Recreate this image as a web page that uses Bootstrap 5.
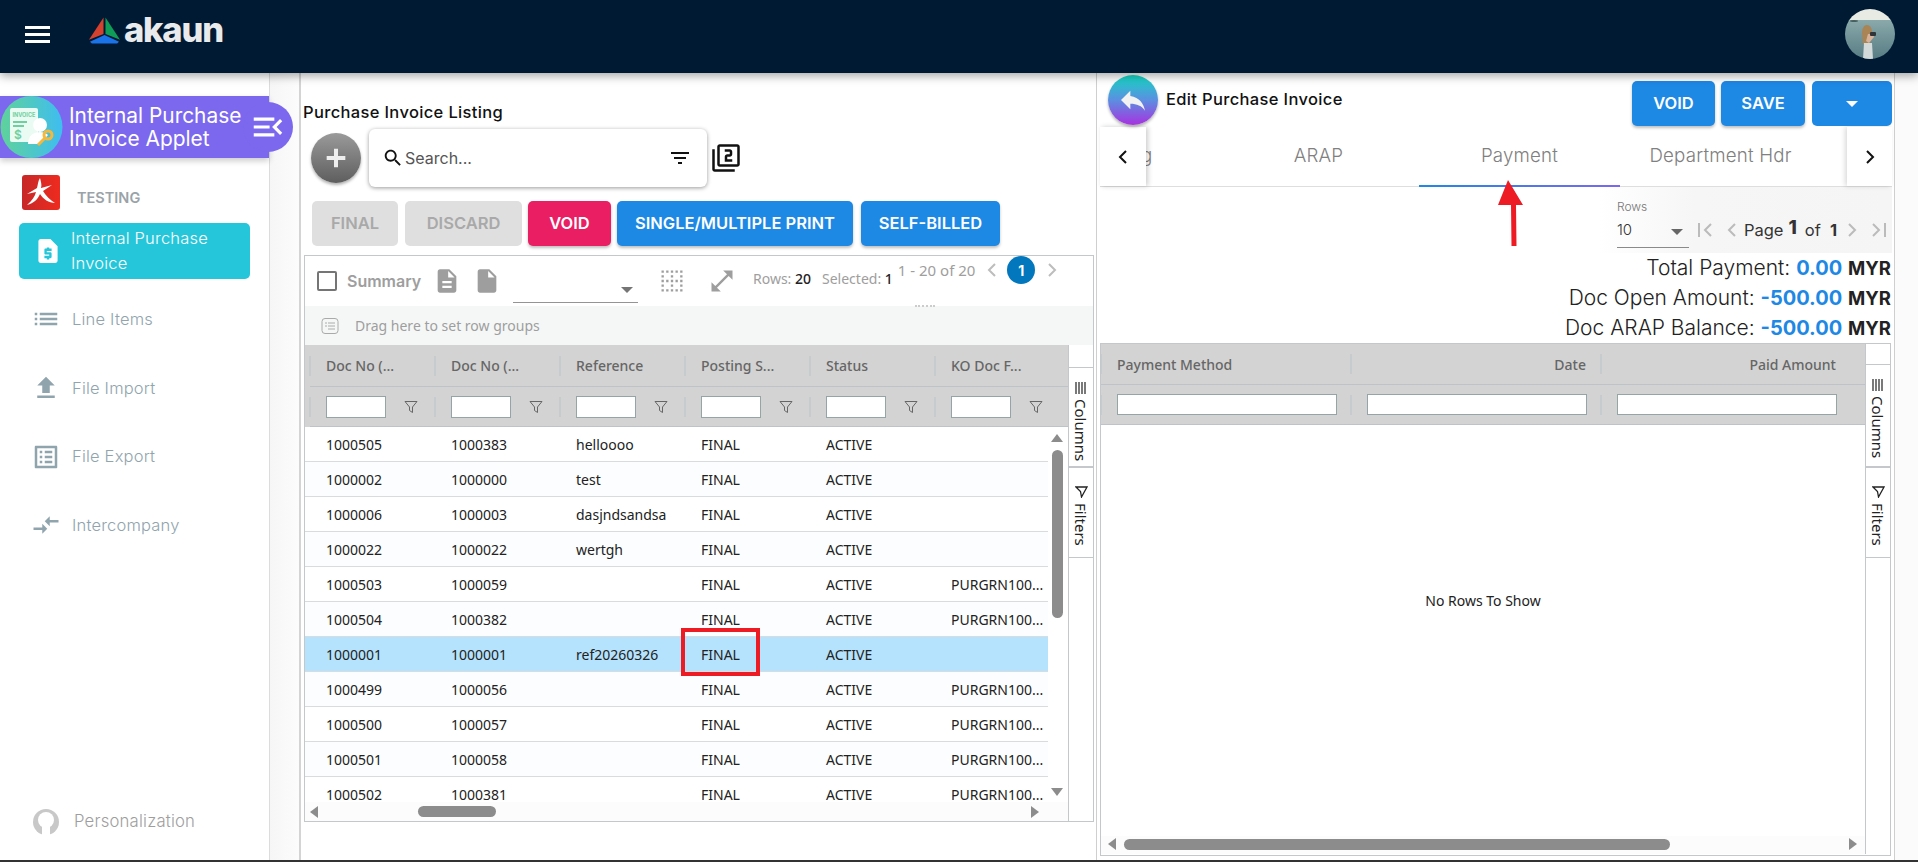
<!DOCTYPE html>
<html lang="en">
<head>
<meta charset="UTF-8">
<title>Internal Purchase Invoice Applet</title>
<link href="https://cdn.jsdelivr.net/npm/bootstrap@5.3.0/dist/css/bootstrap.min.css" rel="stylesheet">
<style>
body{height:862px;width:1918px;overflow:hidden;background:#fff;font-family:Inter,"Liberation Sans",sans-serif;color:#222;position:relative}
.top-bar{height:73px;background:#001a33;box-shadow:0 3px 9px rgba(0,0,0,.35);position:relative;z-index:5;padding-left:25px;padding-right:23px}
.burger{width:25px;height:17px;border-top:3px solid #fff;border-bottom:3px solid #fff;position:relative;margin-top:-5px}
.burger:after{content:"";position:absolute;left:0;right:0;top:4px;height:3px;background:#fff}
.brand-logo{margin-left:38px;margin-top:-11px}
.brand-word{font-weight:800;font-size:34.5px;letter-spacing:-1.2px;color:#e9eaeb;line-height:1;margin-left:3px;margin-top:-12px}
.avatar{width:50px;height:50px;border-radius:50%;overflow:hidden;margin-top:-5px}
.page-wrap{height:787px}
.foot-line{height:2px;background:#333}
.side-nav{width:270px;border-right:1px solid #dcdcdc;padding-top:23px;background:#fff;position:relative}
.applet-head{height:62px;background:#7b68ee;color:#fff;position:relative;box-shadow:0 3px 6px rgba(0,0,0,.2);font-size:20.9px;line-height:23px;font-weight:400;padding-left:69px;white-space:nowrap}
.applet-ico{position:absolute;left:0;top:0}
.applet-tab{position:absolute;right:-24px;top:6px;width:50px;height:50px;border-radius:50%;background:#7b68ee}
.org-row{padding:17px 0 0 22px;height:65px}
.org-name{font-size:14.5px;font-weight:600;color:#9aa3a9;margin-left:17px;margin-top:12px}
.nav-cur{margin-left:19px;width:231px;height:56px;background:#26c6da;border-radius:5px;color:#fff;font-size:16.5px;letter-spacing:.2px;font-weight:300;line-height:25px;padding-left:17px;white-space:nowrap}
.nav-cur span{margin-left:11px;display:block}
.nav-line{height:68.7px;padding-left:31px;color:#90a4ae;font-size:16.5px;letter-spacing:.2px;font-weight:300}
.nav-line svg{fill:#90a4ae;width:30px;height:30px;margin-right:11px;flex:none}
.nav-one{margin-top:6px}
.person-row{margin-top:auto;padding:0 0 25px 33px;color:#9e9e9e;font-size:16.7px;letter-spacing:.2px;font-weight:300}
.person-disc{margin-right:15px;flex:none}
.gutter{width:31px;background:linear-gradient(90deg,#f6f6f6,#fcfcfc);border-right:2px solid #d4d4d4}
.left-pane{width:796px;border-right:1px solid #cfcfcf;padding-left:2px;background:#fff}
.right-pane{width:795px;margin-left:3px;border-right:1px solid #cfcfcf;padding-right:2px}
.end-strip{flex:1;background:#fbfbfb}
.pane-title{font-size:16.5px;letter-spacing:.35px;font-weight:500;color:#111;height:24px;line-height:24px;white-space:nowrap}
.title-row{margin-top:27px}
.fab{width:50px;height:50px;border-radius:50%;background:linear-gradient(180deg,#9a9a9a,#5e5e5e);box-shadow:0 2px 3px rgba(0,0,0,.3);flex:none}
.search-card{width:338px;height:58px;background:#fff;border-radius:6px;box-shadow:0 1px 4px rgba(0,0,0,.4);margin-left:8px;padding:0 15px 0 13px;font-size:16px;color:#555}
.act-row{margin-top:14px;padding-left:9px;height:45px}
.act-btn{height:45px;border:0;border-radius:5px;font-size:16.5px;font-weight:600;padding:0;color:#fff;background:#1e88e5;box-shadow:0 2px 3px rgba(0,0,0,.25)}
.act-off{background:#dfdfdf;color:#a9a9a9;box-shadow:none}
.act-void{background:#e91e63}
.grid-frame{border:1px solid #c5c8ca;background:#fff;font-family:"Noto Sans",sans-serif;font-size:14px;color:#222}
.left-grid{width:790px;height:567px;margin:9px 0 0 1px}
.tool-row{height:50px;color:#9e9e9e;position:relative}
.tick-box{width:20px;height:20px;border:2px solid #757575;border-radius:2px;margin-left:12px}
.sum-word{font-family:Inter,sans-serif;font-weight:600;font-size:16px;color:#9e9e9e;margin-left:10px;width:75px;flex:none;white-space:nowrap}
.pick-line{width:125px;height:32px;border-bottom:1px solid #949494;margin-left:12px;margin-top:12px;position:relative}
.caret-d{width:0;height:0;border-left:6px solid transparent;border-right:6px solid transparent;border-top:6px solid #757575}
.pick-line .caret-d{position:absolute;right:5px;top:16px}
.page-ball{width:28px;height:28px;border-radius:50%;background:#0277bd;color:#fff;font-weight:700;font-family:Inter,sans-serif;font-size:14px;flex:none}
.grip-dots{position:absolute;left:610px;bottom:-1px;width:20px;border-top:2px dotted #ccc}
.group-row{height:39px;background:#f5f7f7;color:#9e9e9e;font-size:14px;padding-left:16px}
.head-cell{width:125px;flex:none;padding-left:16px;position:relative;color:#666;font-weight:500;font-size:14px}
.head-cell:before{content:"";position:absolute;left:-1px;top:50%;height:20px;margin-top:-10px;width:2px;background:#c6cbce}
.hdr-band{background:#d3d3d3;padding-left:5px;overflow:hidden}
.hdr-names{height:42px;border-bottom:1px solid #bcc4c8}
.hdr-filter{height:40px;border-bottom:1px solid #bcc4c8}
.mini-input{width:60px;height:22px;background:#fff;border:1px solid #95a5a6}
.data-rows{width:743px;height:375px;overflow:hidden}
.data-row{height:35px;padding-left:5px;border-bottom:1px solid #d9dcde;background:#fff}
.data-row:nth-child(even){background:#fcfdfe}
.data-row.picked{background:#b5e3fd}
.data-cell{width:125px;flex:none;padding-left:16px;white-space:nowrap;overflow:hidden}
.v-track{width:20px;background:#fff;padding-top:7px}
.v-thumb{width:11px;height:168px;background:#8c8c8c;border-radius:6px;margin:8px 0 0 4px}
.tri-up,.tri-dn{width:0;height:0;border-left:6px solid transparent;border-right:6px solid transparent;margin-left:3px}
.tri-up{border-bottom:8px solid #8c8c8c}
.tri-dn{border-top:8px solid #8c8c8c;margin-top:auto;margin-bottom:6px}
.tri-lf,.tri-rt{width:0;height:0;border-top:6px solid transparent;border-bottom:6px solid transparent}
.tri-lf{border-right:8px solid #8c8c8c}
.tri-rt{border-left:8px solid #8c8c8c}
.h-track{height:19px;background:#fcfcfc}
.h-thumb{height:11px;background:#8c8c8c;border-radius:6px}
.side-tools{width:25px;border-left:1px solid #c5c8ca;font-size:15px;color:#222;flex:none}
.side-tab{border-top:1px solid #c5c8ca;padding-top:14px;writing-mode:vertical-rl;align-items:center;display:flex;width:24px}
.side-tab svg{margin-bottom:5px;flex:none}
.tab-cols{height:101px;border-bottom:2px solid #c5c8ca}
.tab-filt{height:90px;border-top:0;border-bottom:1px solid #c5c8ca;padding-top:17px}
.back-ball{width:50px;height:50px;border-radius:50%;background:linear-gradient(180deg,#14d8c4,#5b8fe0 50%,#a832e0);box-shadow:0 2px 3px rgba(0,0,0,.3);margin:2px 8px 0 8px;flex:none}
.edit-head{height:54px;position:relative;z-index:2}
.edit-btn{height:45px;border:0;border-radius:5px;background:#1e88e5;color:#fff;font-size:16.5px;font-weight:600;box-shadow:0 2px 3px rgba(0,0,0,.25);padding:0}
.tab-strip{height:60px;border-bottom:1px solid #dedede;color:#808080;font-size:18.7px;letter-spacing:.2px;font-weight:300;position:relative}
.tab-arrow{width:46px;height:59px;background:#fff;flex:none;z-index:1}
.tab-arrow.lf{box-shadow:2px 0 5px rgba(0,0,0,.2)}
.tab-arrow.rt{box-shadow:-2px 0 5px rgba(0,0,0,.15);width:45px}
.tab-item{height:59px;flex:none;text-align:center;line-height:58px;width:201px;white-space:nowrap}
.tab-clip{width:72px;overflow:hidden;text-align:left;text-indent:-5px}
.tab-on{position:absolute;left:319px;bottom:-1px;width:201px;height:2px;background:linear-gradient(90deg,#1e88e5,#7b68ee)}
.pager-row{height:66px;background:linear-gradient(90deg,#fff 0,#fff 63%,#f6f6f6 75%,#f5f5f5);color:#9e9e9e}
.rows-pick{width:72px;height:50px;border-bottom:1px solid #8a8a8a;margin-top:6px;position:relative;font-size:12px;font-weight:300;color:#777}
.rows-val{font-size:15px;color:#333;margin-top:3px}
.rows-pick .caret-d{position:absolute;right:6px;top:31px;border-top-color:#666}
.page-word{font-size:16.5px;color:#333;font-weight:400}
.big-one{font-size:19px;font-weight:800;color:#333}
.total-line{height:30px;line-height:30px;font-size:21px;font-weight:300;text-align:right;padding-right:1px;color:#222;white-space:nowrap}
.total-line b{color:#1e88e5;font-weight:700;font-size:20px}
.total-line em{font-style:normal;font-weight:700;color:#222;font-size:18.5px}
.right-grid{width:791px;height:513px}
.head-wide{width:250px;padding-right:15px}
.wide-input{width:220px;height:21px;background:#fff;border:1px solid #95a5a6}
.empty-body{height:411px;padding-bottom:60px;font-size:14px}
.mark-box{position:absolute;left:681px;top:628px;width:79px;height:48px;border:4px solid #ed1c24;z-index:6}
.red-arrow{position:absolute;left:1490px;top:176px;z-index:6}
</style>
</head>
<body>
<nav class="top-bar d-flex align-items-center">
  <div class="burger"></div>
  <svg class="brand-logo" width="33" height="30" viewBox="0 0 34 30"><path d="M16 1 1 24l15-6z" fill="#d5412f"/><path d="M18 1 33 24l-15-6z" fill="#0f9d58"/><path d="M17 19 2 26l2 2h26l2-2z" fill="#1a73e8"/></svg>
  <div class="brand-word">akaun</div>
  <div class="ms-auto avatar">
    <svg width="50" height="50" viewBox="0 0 50 50"><defs><linearGradient id="sea" x1="0" x2="0" y1="0" y2="1"><stop offset="0" stop-color="#8aa9ab"/><stop offset="1" stop-color="#567c83"/></linearGradient></defs><rect width="50" height="12" fill="#e8eae4"/><rect y="11" width="50" height="39" fill="url(#sea)"/><ellipse cx="9" cy="12" rx="4" ry="1" fill="#46605f"/><path d="M17 24c0-5 2-8 5-8s5 3 5 7l-2 12h-7z" fill="#a98455"/><path d="M23 25h5l1 3-5 6-3-2z" fill="#d8b399"/><path d="M19 34h8l1 16H18z" fill="#d4d9da"/><rect x="25" y="23" width="6" height="4" rx="1" fill="#2f3438"/></svg>
  </div>
</nav>

<div class="page-wrap d-flex">
  <aside class="side-nav d-flex flex-column">
    <div class="applet-head d-flex align-items-center">
      <div class="applet-ico">
        <svg width="63" height="62" viewBox="0 0 63 62"><defs><linearGradient id="ig" x1="0" x2="1"><stop offset="0" stop-color="#5fd29a"/><stop offset="1" stop-color="#3fbdf0"/></linearGradient></defs><circle cx="31.500" cy="31" r="31" fill="url(#ig)"/><rect x="10" y="12" width="28" height="34" rx="2" fill="#e9fbf2"/><text x="12.500" y="21" font-size="5.500" font-weight="700" fill="#6ecf9f" font-family="Inter">INVOICE</text><rect x="13" y="25" width="14" height="2" fill="#6ecf9f"/><rect x="13" y="29" width="11" height="2" fill="#6ecf9f"/><text x="14" y="43" font-size="12" font-weight="600" fill="#6ecf9f" font-family="Inter">$</text><circle cx="40" cy="29" r="7" fill="#fff"/><path d="M28 48c0-8 5-12 12-12 3 0 6 1 8 3l-8 9z" fill="#fff"/><circle cx="48" cy="39" r="4" fill="none" stroke="#f5b83d" stroke-width="3"/><path d="M45 42l-7 7" stroke="#f5b83d" stroke-width="3"/></svg>
      </div>
      <div>Internal Purchase<br>Invoice Applet</div>
      <div class="applet-tab d-flex align-items-center justify-content-end">
        <svg style="margin-right:6px" width="38" height="38" viewBox="0 0 24 24" fill="#fff"><path d="M3 18h13v-2H3v2zm0-5h10v-2H3v2zm0-7v2h13V6H3zm18 9.590L17.420 12 21 8.410 19.590 7l-5 5 5 5L21 15.590z"/></svg>
      </div>
    </div>
    <div class="org-row d-flex">
      <svg width="38" height="35" viewBox="0 0 38 35"><defs><linearGradient id="org" x1="0" x2="1"><stop offset="0" stop-color="#c62828"/><stop offset="1" stop-color="#ee2b1f"/></linearGradient></defs><rect width="38" height="35" rx="3" fill="url(#org)"/><path d="M18 3c1 4 2 7 1 10l11-3-9 6c3 5 7 9 12 12-6 0-12-4-15-9-2 5-6 9-13 11 5-4 8-9 9-13l-9 2 10-6c1-4 1-7 3-10z" fill="#fff"/></svg>
      <div class="org-name">TESTING</div>
    </div>
    <div class="nav-cur d-flex align-items-center">
      <svg width="24" height="28" viewBox="2 1 20 22" fill="#fff" style="flex:none"><path d="M14 2H6c-1.100 0-1.990.9-1.990 2L4 20c0 1.100.89 2 1.990 2H18c1.100 0 2-.9 2-2V8l-6-6zm1 10h-4v1h3c.55 0 1 .45 1 1v3c0 .55-.45 1-1 1h-1v1h-2v-1H9v-2h4v-1h-3c-.55 0-1-.45-1-1v-3c0-.55.45-1 1-1h1V9h2v1h2v2z"/></svg>
      <span>Internal Purchase<br>Invoice</span>
    </div>
    <div class="nav-line nav-one d-flex align-items-center"><svg viewBox="0 0 24 24"><path d="M3 13h2v-2H3v2zm0 4h2v-2H3v2zm0-8h2V7H3v2zm4 4h14v-2H7v2zm0 4h14v-2H7v2zM7 7v2h14V7H7z"/></svg>Line Items</div>
    <div class="nav-line d-flex align-items-center"><svg viewBox="0 0 24 24"><path d="M9 16h6v-6h4l-7-7-7 7h4zm-4 2h14v2H5z"/></svg>File Import</div>
    <div class="nav-line d-flex align-items-center"><svg viewBox="0 0 24 24"><path d="M19 5v14H5V5h14m1.100-2H3.900c-.5 0-.9.4-.9.9v16.200c0 .4.4.9.9.9h16.200c.4 0 .9-.5.9-.9V3.900c0-.5-.5-.9-.9-.9zM11 7h6v2h-6V7zm0 4h6v2h-6v-2zm0 4h6v2h-6zM7 7h2v2H7zm0 4h2v2H7zm0 4h2v2H7z"/></svg>File Export</div>
    <div class="nav-line d-flex align-items-center"><svg viewBox="0 0 24 24"><path d="M9.010 14H2v2h7.010v3L13 15l-3.990-4v3zm5.980-1v-3H22V8h-7.010V5L11 9l3.990 4z"/></svg>Intercompany</div>
    <div class="person-row d-flex align-items-center"><svg class="person-disc" width="26" height="26" viewBox="0 0 26 26"><circle cx="13" cy="13" r="13" fill="#c8c8c8"/><circle cx="13" cy="11" r="8" fill="#fff"/><rect x="9" y="15" width="8" height="11" fill="#fff"/></svg>Personalization</div>
  </aside>
  <div class="gutter"></div>

  <section class="left-pane">
    <div class="pane-title title-row">Purchase Invoice Listing</div>
    <div class="d-flex align-items-center" style="margin-top:5px;padding-left:8px">
      <div class="fab d-flex align-items-center justify-content-center"><svg width="32" height="32" viewBox="0 0 24 24" fill="#eee"><path d="M19 13.500h-5.500V19h-3v-5.500H5v-3h5.500V5h3v5.500H19z"/></svg></div>
      <div class="search-card d-flex align-items-center">
        <svg width="22" height="22" viewBox="0 0 24 24" fill="#111"><path d="M15.500 14h-.79l-.28-.27C15.410 12.590 16 11.110 16 9.500 16 5.910 13.090 3 9.500 3S3 5.910 3 9.500 5.910 16 9.500 16c1.610 0 3.090-.59 4.230-1.570l.27.28v.79l5 4.990L20.490 19l-4.990-5zm-6 0C7.010 14 5 11.990 5 9.500S7.010 5 9.500 5 14 7.010 14 9.500 11.990 14 9.500 14z"/></svg>
        <span style="margin-left:1px">Search...</span>
        <svg class="ms-auto" width="24" height="24" viewBox="0 0 24 24" fill="#111"><path d="M10 18h4v-2h-4v2zM3 6v2h18V6H3zm3 7h12v-2H6v2z"/></svg>
      </div>
      <svg class="ms-1" width="30" height="30" viewBox="0 0 24 24" fill="#111"><path d="M3 5H1v16c0 1.100.9 2 2 2h16v-2H3V5zm18-4H7c-1.100 0-2 .9-2 2v14c0 1.100.9 2 2 2h14c1.100 0 2-.9 2-2V3c0-1.100-.9-2-2-2zm0 16H7V3h14v14zm-4-4h-4v-2h2c1.100 0 2-.89 2-2V7c0-1.110-.9-2-2-2h-4v2h4v2h-2c-1.100 0-2 .89-2 2v4h6v-2z"/></svg>
    </div>
    <div class="act-row d-flex">
      <button class="act-btn act-off" style="width:86px">FINAL</button>
      <button class="act-btn act-off" style="width:117px;margin-left:7px">DISCARD</button>
      <button class="act-btn act-void" style="width:83px;margin-left:6px">VOID</button>
      <button class="act-btn" style="width:236px;margin-left:6px">SINGLE/MULTIPLE PRINT</button>
      <button class="act-btn" style="width:139px;margin-left:8px">SELF-BILLED</button>
    </div>

    <div class="grid-frame left-grid">
      <div class="tool-row d-flex align-items-center">
        <div class="tick-box"></div><div class="sum-word">Summary</div>
        <svg style="margin-left:11px" width="28" height="28" viewBox="0 0 24 24" fill="#9e9e9e"><path d="M14 2H6c-1.100 0-1.990.9-1.990 2L4 20c0 1.100.89 2 1.990 2H18c1.100 0 2-.9 2-2V8l-6-6zm2 16H8v-2h8v2zm0-4H8v-2h8v2zm-3-5V3.500L18.500 9H13z"/></svg>
        <svg style="margin-left:12px" width="28" height="28" viewBox="0 0 24 24" fill="#9e9e9e"><path d="M6 2c-1.100 0-1.990.9-1.990 2L4 20c0 1.100.89 2 1.990 2H18c1.100 0 2-.9 2-2V8l-6-6H6zm7 7V3.500L18.500 9H13z"/></svg>
        <div class="pick-line"><div class="caret-d"></div></div>
        <svg style="margin-left:20px" width="28" height="28" viewBox="0 0 24 24" fill="#9e9e9e"><path d="M7 5h2V3H7v2zm0 8h2v-2H7v2zm0 8h2v-2H7v2zm4-4h2v-2h-2v2zm0 4h2v-2h-2v2zm-8 0h2v-2H3v2zm0-4h2v-2H3v2zm0-4h2v-2H3v2zm0-4h2V7H3v2zm0-4h2V3H3v2zm8 8h2v-2h-2v2zm8 4h2v-2h-2v2zm0-4h2v-2h-2v2zm0 8h2v-2h-2v2zm0-12h2V7h-2v2zm-8 0h2V7h-2v2zm8-6v2h2V3h-2zm-8 2h2V3h-2v2zm4 16h2v-2h-2v2zm0-8h2v-2h-2v2zm0-8h2V3h-2v2z"/></svg>
        <svg style="margin-left:22px" width="28" height="28" viewBox="0 0 24 24" fill="#9e9e9e"><path d="M21 11V3h-8l3.290 3.290-10 10L3 13v8h8l-3.290-3.290 10-10z"/></svg>
        <div style="margin-left:17px;margin-top:-6px;white-space:nowrap;font-size:14px">Rows: <span style="color:#222;font-weight:500;margin-right:11px">20</span>Selected: <span style="color:#222;font-weight:500">1</span></div>
        <div style="margin-left:5px;margin-top:-22px;white-space:nowrap;font-size:15px">1 - 20 of 20</div>
        <svg style="margin:-22px 0 0 12px" width="10" height="16" viewBox="0 0 10 16" fill="none" stroke="#bdbdbd" stroke-width="2"><path d="M8 2 2 8l6 6"/></svg>
        <div class="page-ball d-flex align-items-center justify-content-center" style="margin:-22px 0 0 10px">1</div>
        <svg style="margin:-22px 0 0 12px" width="10" height="16" viewBox="0 0 10 16" fill="none" stroke="#bdbdbd" stroke-width="2"><path d="M2 2l6 6-6 6"/></svg>
        <div class="grip-dots"></div>
      </div>
      <div class="group-row d-flex align-items-center">
        <svg width="18" height="18" viewBox="0 0 18 18" fill="none" stroke="#aaa"><rect x="1" y="1.500" width="16" height="15" rx="3"/><path d="M4 6h2M7 6h7M4 9h2M7 9h7M7 12h7"/></svg>
        <span style="margin-left:16px">Drag here to set row groups</span>
      </div>
      <div class="d-flex">
        <div style="width:763px">
          <div class="hdr-band">
            <div class="hdr-names d-flex align-items-center" id="leftHead"></div>
            <div class="hdr-filter d-flex align-items-center" id="leftFilter"></div>
          </div>
          <div class="d-flex">
            <div class="data-rows" id="leftRows"></div>
            <div class="v-track d-flex flex-column"><div class="tri-up"></div><div class="v-thumb"></div><div class="tri-dn"></div></div>
          </div>
          <div class="h-track d-flex align-items-center">
            <div class="tri-lf" style="margin-left:5px"></div><div class="h-thumb" style="width:78px;margin-left:100px"></div><div class="tri-rt" style="margin-left:535px"></div>
          </div>
        </div>
        <div class="side-tools">
          <div style="height:22px"></div>
          <div class="side-tab tab-cols"><svg width="12" height="12" viewBox="0 0 12 12" stroke="#333" stroke-width="1.300"><path d="M1 0v12M4 0v12M7 0v12M10 0v12"/></svg>Columns</div>
          <div class="side-tab tab-filt"><svg width="13" height="13" viewBox="0 0 13 13" fill="none" stroke="#222" stroke-width="1.300"><path d="M1 2h11L6.500 12 5.500 6.500z"/></svg>Filters</div>
        </div>
      </div>
    </div>
  </section>

  <section class="right-pane">
    <div class="edit-head d-flex align-items-start">
      <div class="back-ball d-flex align-items-center justify-content-center"><svg width="32" height="32" viewBox="0 0 24 24" fill="#f2f2f2"><path d="M10 9V5l-7 7 7 7v-4.100c5 0 8.500 1.600 11 5.100-1-5-4-10-11-11z"/></svg></div>
      <div class="pane-title" style="margin-top:14px">Edit Purchase Invoice</div>
      <div class="ms-auto d-flex" style="margin-top:8px;gap:6px">
        <button class="edit-btn" style="width:83px">VOID</button>
        <button class="edit-btn" style="width:84px">SAVE</button>
        <button class="edit-btn d-flex align-items-center justify-content-center" style="width:80px;margin-left:1px;box-shadow:none"><span class="caret-d" style="border-top-color:#fff"></span></button>
      </div>
    </div>
    <div class="tab-strip d-flex">
      <div class="tab-arrow lf d-flex align-items-center justify-content-center"><svg width="12" height="16" viewBox="0 0 12 16" fill="none" stroke="#111" stroke-width="2"><path d="M9 2 3 8l6 6"/></svg></div>
      <div class="tab-item tab-clip">g</div>
      <div class="tab-item">ARAP</div>
      <div class="tab-item">Payment</div>
      <div class="tab-item">Department Hdr</div>
      <div class="tab-arrow rt d-flex align-items-center justify-content-center ms-auto"><svg width="12" height="16" viewBox="0 0 12 16" fill="none" stroke="#111" stroke-width="2"><path d="M3 2l6 6-6 6"/></svg></div>
      <div class="tab-on"></div>
    </div>
    <div class="pager-row d-flex align-items-center justify-content-end" style="padding-right:5px">
      <div class="rows-pick"><div>Rows</div><div class="rows-val">10</div><div class="caret-d"></div></div>
      <div class="d-flex align-items-center" style="margin-top:20px">
        <svg style="margin-left:8px" width="16" height="16" viewBox="0 0 16 16" fill="none" stroke="#bbb" stroke-width="2"><path d="M2 1v14M14 2 8 8l6 6"/></svg>
        <svg style="margin-left:14px" width="10" height="16" viewBox="0 0 10 16" fill="none" stroke="#bbb" stroke-width="2"><path d="M8 2 2 8l6 6"/></svg>
        <span class="page-word" style="margin-left:7px">Page</span><span class="big-one" style="margin:-3px 8px 0 5px">1</span><span class="page-word">of</span><span class="page-word fw-bold" style="margin-left:9px">1</span>
        <svg style="margin-left:10px" width="10" height="16" viewBox="0 0 10 16" fill="none" stroke="#bbb" stroke-width="2"><path d="M2 2l6 6-6 6"/></svg>
        <svg style="margin-left:14px" width="16" height="16" viewBox="0 0 16 16" fill="none" stroke="#bbb" stroke-width="2"><path d="M2 2l6 6-6 6M14 1v14"/></svg>
      </div>
    </div>
    <div class="total-line">Total Payment: <b>0.00</b> <em>MYR</em></div>
    <div class="total-line">Doc Open Amount: <b>-500.00</b> <em>MYR</em></div>
    <div class="total-line">Doc ARAP Balance: <b>-500.00</b> <em>MYR</em></div>
    <div class="grid-frame right-grid">
      <div class="d-flex">
        <div style="width:764px">
          <div class="hdr-band" style="padding-left:0">
            <div class="hdr-names d-flex align-items-center" style="height:41px">
              <div class="head-cell head-wide">Payment Method</div>
              <div class="head-cell head-wide text-end">Date</div>
              <div class="head-cell head-wide text-end">Paid Amount</div>
            </div>
            <div class="hdr-filter d-flex align-items-center">
              <div class="head-cell head-wide"><div class="wide-input"></div></div>
              <div class="head-cell head-wide"><div class="wide-input"></div></div>
              <div class="head-cell head-wide"><div class="wide-input"></div></div>
            </div>
          </div>
          <div class="empty-body d-flex align-items-center justify-content-center">No Rows To Show</div>
          <div class="h-track d-flex align-items-center" style="height:18px;padding-bottom:2px">
            <div class="tri-lf" style="margin-left:7px"></div><div class="h-thumb" style="width:546px;margin-left:8px"></div><div class="tri-rt" style="margin-left:179px"></div>
          </div>
        </div>
        <div class="side-tools">
          <div style="height:20px"></div>
          <div class="side-tab tab-cols" style="height:104px"><svg width="12" height="12" viewBox="0 0 12 12" stroke="#333" stroke-width="1.300"><path d="M1 0v12M4 0v12M7 0v12M10 0v12"/></svg>Columns</div>
          <div class="side-tab tab-filt"><svg width="13" height="13" viewBox="0 0 13 13" fill="none" stroke="#222" stroke-width="1.300"><path d="M1 2h11L6.500 12 5.500 6.500z"/></svg>Filters</div>
        </div>
      </div>
    </div>
  </section>
  <div class="end-strip"></div>
</div>
<div class="foot-line"></div>

<!-- annotations drawn over the screenshot -->
<div class="mark-box"></div>
<svg class="red-arrow" width="36" height="72" viewBox="0 0 36 72"><path d="M18 4 8 29h13l.5 41h5L26 29h7z" fill="#ed1c24"/></svg>

<script>
    const heads = ['Doc No (...', 'Doc No (...', 'Reference', 'Posting S...', 'Status', 'KO Doc F...'];
    const funnel = '<svg class="ms-auto" style="margin-right:17px" width="14" height="14" viewBox="0 0 14 14" fill="none" stroke="#666"><path d="M1 1.500h12L8.500 7v5.500l-3-2V7z"/></svg>';
    document.getElementById('leftHead').innerHTML = heads.map(h => `<div class="head-cell">${h}</div>`).join('');
    document.getElementById('leftFilter').innerHTML = heads.map(() => `<div class="head-cell d-flex align-items-center"><div class="mini-input"></div>${funnel}</div>`).join('');

    const ko = 'PURGRN100...';
    const rows = [
        ['1000505', '1000383', 'helloooo', ''],
        ['1000002', '1000000', 'test', ''],
        ['1000006', '1000003', 'dasjndsandsa', ''],
        ['1000022', '1000022', 'wertgh', ''],
        ['1000503', '1000059', '', ko],
        ['1000504', '1000382', '', ko],
        ['1000001', '1000001', 'ref20260326', ''],
        ['1000499', '1000056', '', ko],
        ['1000500', '1000057', '', ko],
        ['1000501', '1000058', '', ko],
        ['1000502', '1000381', '', ko]
    ];
    document.getElementById('leftRows').innerHTML = rows.map((r, i) => {
        const cells = [r[0], r[1], r[2], 'FINAL', 'ACTIVE', r[3]];
        return `<div class="data-row d-flex align-items-center${i === 6 ? ' picked' : ''}">` +
            cells.map(c => `<div class="data-cell">${c}</div>`).join('') + '</div>';
    }).join('');
</script>
<script src="https://cdn.jsdelivr.net/npm/bootstrap@5.3.0/dist/js/bootstrap.bundle.min.js"></script>
</body>
</html>
